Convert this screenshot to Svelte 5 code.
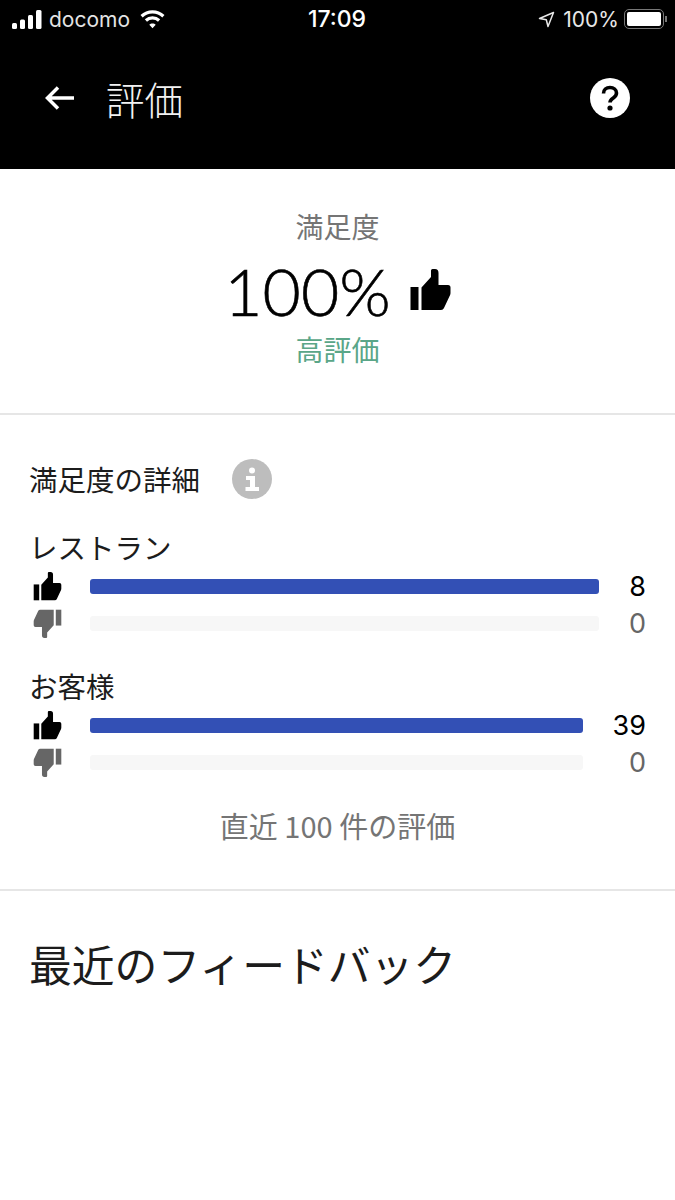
<script>
	const groups = [
		{ name: 'レストラン', up: 8, down: 0, width: 509 },
		{ name: 'お客様', up: 39, down: 0, width: 493 }
	];
</script>

{#snippet thumb(cls)}
	<svg class={cls} viewBox="0 0 40 42" aria-hidden="true">
		<path d="M0 18h8v23H0z" />
		<path d="M11 41V18.500L20.500 8V1.500Q20.500 0 22 0h2.500Q28 0 28 4v12h9.500q2.500 0 2.500 2.500v5.500q0 1-.4 2L33.500 39q-.8 2-3 2z" />
	</svg>
{/snippet}

<div class="page">
	<header class="top">
		<div class="status">
			<div class="status-left">
				<svg class="signal" viewBox="0 0 30 19" aria-hidden="true">
					<rect x="0" y="13" width="5" height="6" rx="1.500" />
					<rect x="8" y="9.500" width="5" height="9.500" rx="1.500" />
					<rect x="16" y="5" width="5" height="14" rx="1.500" />
					<rect x="24" y="0" width="5.500" height="19" rx="1.500" />
				</svg>
				<span class="carrier">docomo</span>
				<svg class="wifi" viewBox="0 0 27 20" aria-hidden="true">
					<path d="M13.500 4.500a14 14 0 0 1 9.800 4l2.200-2.400a17.500 17.500 0 0 0-24 0l2.200 2.400a14 14 0 0 1 9.800-4z" />
					<path d="M13.500 10.500a8 8 0 0 1 5.500 2.200l2.200-2.400a11.300 11.300 0 0 0-15.400 0l2.200 2.400a8 8 0 0 1 5.500-2.200z" />
					<path d="M13.500 14.500c-1.300 0-2.400.5-3.200 1.300l3.200 3.500 3.200-3.500c-.8-.8-1.900-1.300-3.200-1.300z" />
				</svg>
			</div>
			<span class="clock">17:09</span>
			<div class="status-right">
				<svg class="location" viewBox="0 0 17 17" aria-hidden="true">
					<path d="M15.500 1.500 1.500 7.500l6.800 1.300 1.700 6.700z" />
				</svg>
				<span class="battery-text">100%</span>
				<div class="battery"><div class="battery-fill"></div></div>
				<div class="battery-cap"></div>
			</div>
		</div>
		<div class="nav">
			<svg class="back" viewBox="0 0 32 26" aria-hidden="true">
				<path d="M30 13H4M14 2.500 3.500 13 14 23.500" />
			</svg>
			<h1>評価</h1>
			<svg class="help" viewBox="0 0 40 40" aria-hidden="true">
				<circle cx="20" cy="20" r="20" fill="#fff" />
				<path d="M13.500 15.500c0-3.500 2.800-6 6.500-6s6.500 2.300 6.500 5.500c0 2.500-1.300 3.700-3.200 5-1.800 1.200-3.300 2-3.300 4.500" fill="none" stroke="#000" stroke-width="3.600" />
				<circle cx="20" cy="30" r="2.600" fill="#000" />
			</svg>
		</div>
	</header>

	<section class="hero">
		<div class="hero-label">満足度</div>
		<div class="hero-score">
			<span>100%</span>
			{@render thumb('thumb-large')}
		</div>
		<div class="hero-rating">高評価</div>
	</section>

	<section class="details">
		<div class="details-head">
			<h2>満足度の詳細</h2>
			<svg class="info" viewBox="0 0 40 40" aria-hidden="true">
				<circle cx="20" cy="20" r="20" fill="#bdbdbd" />
				<circle cx="20" cy="11.500" r="3" fill="#fff" />
				<path d="M14 17h9v11h4v4H13.500v-4H18v-7h-4z" fill="#fff" />
			</svg>
		</div>

		{#each groups as group}
			<div class="group">
				<div class="group-name">{group.name}</div>
				<div class="bar-row">
					{@render thumb('thumb-small')}
					<div class="track">
						<div class="bar up" style:width="{group.width}px"></div>
					</div>
					<span class="count">{group.up}</span>
				</div>
				<div class="bar-row">
					{@render thumb('thumb-small down')}
					<div class="track">
						<div class="bar empty" style:width="{group.width}px"></div>
					</div>
					<span class="count muted">{group.down}</span>
				</div>
			</div>
		{/each}

		<p class="note">直近 100 件の評価</p>
	</section>

	<section class="feedback">
		<h2>最近のフィードバック</h2>
	</section>
</div>

<style>
	:global(body) {
		margin: 0;
		background: #fff;
	}

	.page {
		width: 675px;
		height: 1200px;
		overflow: hidden;
		font-family: 'Noto Sans CJK JP', 'Inter', sans-serif;
		color: #000;
	}

	.top {
		height: 169px;
		background: #000;
		color: #fff;
	}

	.status {
		display: grid;
		grid-template-columns: 1fr auto 1fr;
		align-items: center;
		height: 38px;
		padding: 0 8px 0 12px;
		font-family: 'Inter', sans-serif;
		font-size: 21px;
	}

	.status-left,
	.status-right {
		display: flex;
		align-items: center;
	}

	.status-right {
		justify-self: end;
	}

	.signal {
		width: 30px;
		height: 19px;
		fill: #fff;
	}

	.carrier {
		margin-left: 7px;
		color: #e4e4e4;
	}

	.wifi {
		width: 27px;
		height: 20px;
		margin-left: 9px;
		fill: #fff;
	}

	.clock {
		margin-left: -5px;
		font-size: 23px;
		font-weight: 500;
	}

	.location {
		width: 17px;
		height: 17px;
		fill: none;
		stroke: #e8e8e8;
		stroke-width: 1.500;
		stroke-linejoin: round;
	}

	.battery-text {
		margin-left: 8px;
		color: #e8e8e8;
	}

	.battery {
		width: 40px;
		height: 20px;
		box-sizing: border-box;
		margin-left: 5px;
		padding: 2px;
		border: 1.500px solid #777;
		border-radius: 5px;
	}

	.battery-fill {
		height: 100%;
		border-radius: 2px;
		background: #fff;
	}

	.battery-cap {
		width: 2px;
		height: 6px;
		margin-left: 1px;
		background: #777;
	}

	.nav {
		display: flex;
		align-items: center;
		height: 120px;
		padding: 0 45px 0 44px;
	}

	.back {
		width: 32px;
		height: 26px;
		fill: none;
		stroke: #fff;
		stroke-width: 3.500;
	}

	h1 {
		margin: 0 0 0 30px;
		font-size: 38.500px;
		font-weight: 300;
		line-height: 1;
		color: #f2f2f2;
	}

	.help {
		width: 40px;
		height: 40px;
		margin-left: auto;
	}

	.hero {
		display: flex;
		flex-direction: column;
		align-items: center;
		box-sizing: border-box;
		height: 246px;
		padding-top: 38px;
		border-bottom: 2px solid #e6e6e6;
	}

	.hero-label {
		font-size: 28px;
		line-height: 38px;
		color: #757575;
	}

	.hero-score {
		display: flex;
		align-items: center;
		gap: 19px;
		height: 78px;
		margin-top: 6px;
		font-family: 'Lato', sans-serif;
		font-size: 66px;
		font-weight: 300;
		-webkit-text-stroke: 0.6px #000;
	}

	.hero-rating {
		font-size: 28px;
		line-height: 40px;
		color: #5aa688;
	}

	:global(.thumb-large) {
		width: 41px;
		height: 42px;
		fill: #000;
	}

	:global(.thumb-small) {
		width: 29px;
		height: 29px;
		fill: #000;
	}

	:global(.thumb-small.down) {
		fill: #666;
		transform: rotate(180deg);
	}

	.details {
		box-sizing: border-box;
		height: 476px;
		padding: 44px 29px 0 29px;
		border-bottom: 2px solid #e6e6e6;
	}

	.details-head {
		display: flex;
		align-items: center;
		gap: 32px;
		height: 40px;
	}

	h2 {
		margin: 0;
		font-weight: 400;
		color: #1c1c1c;
	}

	.details-head h2 {
		font-size: 28.500px;
		line-height: 40px;
	}

	.info {
		width: 40px;
		height: 40px;
	}

	.group {
		margin-top: 28px;
	}

	.group + .group {
		margin-top: 24px;
	}

	.group-name {
		padding-bottom: 2px;
		font-size: 28.500px;
		line-height: 39px;
		color: #1c1c1c;
	}

	.bar-row {
		display: flex;
		align-items: center;
		height: 37px;
		padding-left: 4px;
	}

	.track {
		flex: 1;
		margin-left: 28px;
	}

	.bar {
		height: 15px;
		border-radius: 3px;
	}

	.bar.up {
		background: #3350b5;
	}

	.bar.empty {
		background: #f7f7f7;
	}

	.count {
		font-family: 'Inter', sans-serif;
		font-size: 27px;
		line-height: 37px;
	}

	.count.muted {
		color: #666;
	}

	.note {
		margin: 24px 0 0;
		font-size: 29px;
		line-height: 40px;
		text-align: center;
		color: #757575;
	}

	.feedback {
		padding: 42px 30px 0 29px;
	}

	.feedback h2 {
		font-size: 42.800px;
		line-height: 60px;
	}
</style>
